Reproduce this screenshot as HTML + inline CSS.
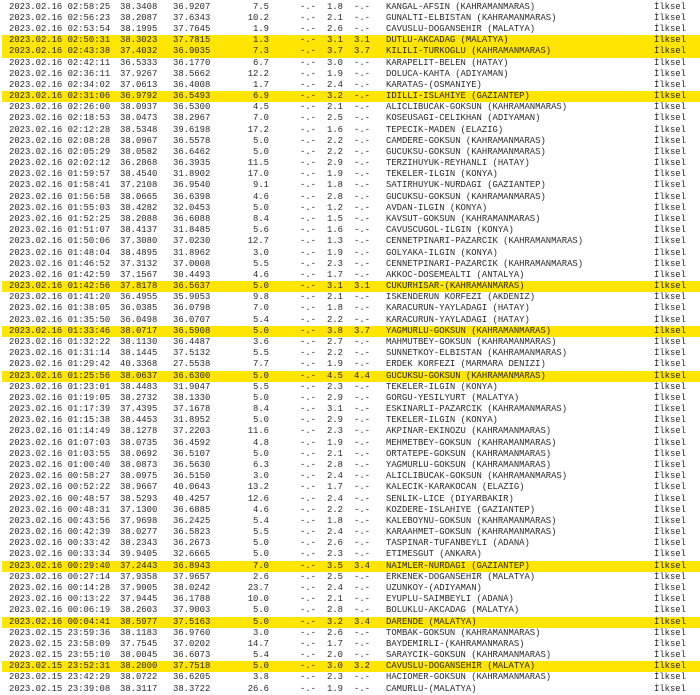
<!DOCTYPE html>
<html><head><meta charset="utf-8"><style>
html,body{margin:0;padding:0;background:#fff;width:700px;height:695px;overflow:hidden}
body{font-family:"Liberation Mono","DejaVu Sans Mono",monospace;font-size:8.9px;color:#2a2a2a;position:relative}
.r{position:absolute;left:2px;width:698px;height:11.2px;line-height:11.2px;white-space:pre}
.h{background:#ffe500}
.r span{position:absolute;top:0}
.a{left:7px}.b{left:118px}.c{left:171px}.d{right:431px;text-align:right}.e{left:298px}.f{left:325px}.g{left:352px}.n{left:384px}.k{left:652px}
</style></head><body>
<div id="t"></div>
<script>
var rows=[
["2023.02.16 02:58:25","38.3408","36.9207","7.5","1.8","-.-","KANGAL-AFSIN (KAHRAMANMARAS)",0],
["2023.02.16 02:56:23","38.2087","37.6343","10.2","2.1","-.-","GUNALTI-ELBISTAN (KAHRAMANMARAS)",0],
["2023.02.16 02:53:54","38.1995","37.7645","1.9","2.6","-.-","CAVUSLU-DOGANSEHIR (MALATYA)",0],
["2023.02.16 02:50:31","38.3023","37.7815","1.3","3.1","3.1","DUTLU-AKCADAG (MALATYA)",1],
["2023.02.16 02:43:38","37.4032","36.9035","7.3","3.7","3.7","KILILI-TURKOGLU (KAHRAMANMARAS)",1],
["2023.02.16 02:42:11","36.5333","36.1770","6.7","3.0","-.-","KARAPELIT-BELEN (HATAY)",0],
["2023.02.16 02:36:11","37.9267","38.5662","12.2","1.9","-.-","DOLUCA-KAHTA (ADIYAMAN)",0],
["2023.02.16 02:34:02","37.0613","36.4008","1.7","2.4","-.-","KARATAS-(OSMANIYE)",0],
["2023.02.16 02:31:06","36.9792","36.5493","6.9","3.2","-.-","IDILLI-ISLAHIYE (GAZIANTEP)",1],
["2023.02.16 02:26:00","38.0937","36.5300","4.5","2.1","-.-","ALICLIBUCAK-GOKSUN (KAHRAMANMARAS)",0],
["2023.02.16 02:18:53","38.0473","38.2967","7.0","2.5","-.-","KOSEUSAGI-CELIKHAN (ADIYAMAN)",0],
["2023.02.16 02:12:28","38.5348","39.6198","17.2","1.6","-.-","TEPECIK-MADEN (ELAZIG)",0],
["2023.02.16 02:08:28","38.0967","36.5578","5.0","2.2","-.-","CAMDERE-GOKSUN (KAHRAMANMARAS)",0],
["2023.02.16 02:05:29","38.0582","36.6462","5.0","2.2","-.-","GUCUKSU-GOKSUN (KAHRAMANMARAS)",0],
["2023.02.16 02:02:12","36.2868","36.3935","11.5","2.9","-.-","TERZIHUYUK-REYHANLI (HATAY)",0],
["2023.02.16 01:59:57","38.4540","31.8902","17.0","1.9","-.-","TEKELER-ILGIN (KONYA)",0],
["2023.02.16 01:58:41","37.2108","36.9540","9.1","1.8","-.-","SATIRHUYUK-NURDAGI (GAZIANTEP)",0],
["2023.02.16 01:56:58","38.0665","36.6398","4.6","2.8","-.-","GUCUKSU-GOKSUN (KAHRAMANMARAS)",0],
["2023.02.16 01:55:03","38.4282","32.0453","5.0","1.2","-.-","AVDAN-ILGIN (KONYA)",0],
["2023.02.16 01:52:25","38.2088","36.6088","8.4","1.5","-.-","KAVSUT-GOKSUN (KAHRAMANMARAS)",0],
["2023.02.16 01:51:07","38.4137","31.8485","5.6","1.6","-.-","CAVUSCUGOL-ILGIN (KONYA)",0],
["2023.02.16 01:50:06","37.3080","37.0230","12.7","1.3","-.-","CENNETPINARI-PAZARCIK (KAHRAMANMARAS)",0],
["2023.02.16 01:48:04","38.4895","31.8962","3.0","1.9","-.-","GOLYAKA-ILGIN (KONYA)",0],
["2023.02.16 01:46:52","37.3132","37.0008","5.5","2.3","-.-","CENNETPINARI-PAZARCIK (KAHRAMANMARAS)",0],
["2023.02.16 01:42:59","37.1567","30.4493","4.6","1.7","-.-","AKKOC-DOSEMEALTI (ANTALYA)",0],
["2023.02.16 01:42:56","37.8178","36.5637","5.0","3.1","3.1","CUKURHISAR-(KAHRAMANMARAS)",1],
["2023.02.16 01:41:20","36.4955","35.9053","9.8","2.1","-.-","ISKENDERUN KORFEZI (AKDENIZ)",0],
["2023.02.16 01:38:05","36.0385","36.0798","7.0","1.8","-.-","KARACURUN-YAYLADAGI (HATAY)",0],
["2023.02.16 01:35:50","36.0498","36.0707","5.4","2.2","-.-","KARACURUN-YAYLADAGI (HATAY)",0],
["2023.02.16 01:33:46","38.0717","36.5908","5.0","3.8","3.7","YAGMURLU-GOKSUN (KAHRAMANMARAS)",1],
["2023.02.16 01:32:22","38.1130","36.4487","3.6","2.7","-.-","MAHMUTBEY-GOKSUN (KAHRAMANMARAS)",0],
["2023.02.16 01:31:14","38.1445","37.5132","5.5","2.2","-.-","SUNNETKOY-ELBISTAN (KAHRAMANMARAS)",0],
["2023.02.16 01:29:42","40.3368","27.5538","7.7","1.9","-.-","ERDEK KORFEZI (MARMARA DENIZI)",0],
["2023.02.16 01:25:56","38.0637","36.6300","5.0","4.5","4.4","GUCUKSU-GOKSUN (KAHRAMANMARAS)",1],
["2023.02.16 01:23:01","38.4483","31.9047","5.5","2.3","-.-","TEKELER-ILGIN (KONYA)",0],
["2023.02.16 01:19:05","38.2732","38.1330","5.0","2.9","-.-","GORGU-YESILYURT (MALATYA)",0],
["2023.02.16 01:17:39","37.4395","37.1678","8.4","3.1","-.-","ESKINARLI-PAZARCIK (KAHRAMANMARAS)",0],
["2023.02.16 01:15:38","38.4453","31.8952","5.0","2.9","-.-","TEKELER-ILGIN (KONYA)",0],
["2023.02.16 01:14:49","38.1278","37.2203","11.6","2.3","-.-","AKPINAR-EKINOZU (KAHRAMANMARAS)",0],
["2023.02.16 01:07:03","38.0735","36.4592","4.8","1.9","-.-","MEHMETBEY-GOKSUN (KAHRAMANMARAS)",0],
["2023.02.16 01:03:55","38.0692","36.5107","5.0","2.1","-.-","ORTATEPE-GOKSUN (KAHRAMANMARAS)",0],
["2023.02.16 01:00:40","38.0873","36.5630","6.3","2.8","-.-","YAGMURLU-GOKSUN (KAHRAMANMARAS)",0],
["2023.02.16 00:58:27","38.0975","36.5150","3.0","2.4","-.-","ALICLIBUCAK-GOKSUN (KAHRAMANMARAS)",0],
["2023.02.16 00:52:22","38.9667","40.0643","13.2","1.7","-.-","KALECIK-KARAKOCAN (ELAZIG)",0],
["2023.02.16 00:48:57","38.5293","40.4257","12.6","2.4","-.-","SENLIK-LICE (DIYARBAKIR)",0],
["2023.02.16 00:48:31","37.1300","36.6885","4.6","2.2","-.-","KOZDERE-ISLAHIYE (GAZIANTEP)",0],
["2023.02.16 00:43:56","37.9698","36.2425","5.4","1.8","-.-","KALEBOYNU-GOKSUN (KAHRAMANMARAS)",0],
["2023.02.16 00:42:39","38.0277","36.5823","5.5","2.4","-.-","KARAAHMET-GOKSUN (KAHRAMANMARAS)",0],
["2023.02.16 00:33:42","38.2343","36.2673","5.0","2.6","-.-","TASPINAR-TUFANBEYLI (ADANA)",0],
["2023.02.16 00:33:34","39.9405","32.6665","5.0","2.3","-.-","ETIMESGUT (ANKARA)",0],
["2023.02.16 00:29:40","37.2443","36.8943","7.0","3.5","3.4","NAIMLER-NURDAGI (GAZIANTEP)",1],
["2023.02.16 00:27:14","37.9358","37.9657","2.6","2.5","-.-","ERKENEK-DOGANSEHIR (MALATYA)",0],
["2023.02.16 00:14:28","37.9005","38.0242","23.7","2.4","-.-","UZUNKOY-(ADIYAMAN)",0],
["2023.02.16 00:13:22","37.9445","36.1788","10.0","2.1","-.-","EYUPLU-SAIMBEYLI (ADANA)",0],
["2023.02.16 00:06:19","38.2603","37.9003","5.0","2.8","-.-","BOLUKLU-AKCADAG (MALATYA)",0],
["2023.02.16 00:04:41","38.5977","37.5163","5.0","3.2","3.4","DARENDE (MALATYA)",1],
["2023.02.15 23:59:36","38.1183","36.9760","3.0","2.6","-.-","TOMBAK-GOKSUN (KAHRAMANMARAS)",0],
["2023.02.15 23:58:09","37.7545","37.0202","14.7","1.7","-.-","BAYDEMIRLI-(KAHRAMANMARAS)",0],
["2023.02.15 23:55:10","38.0045","36.6073","5.4","2.0","-.-","SARAYCIK-GOKSUN (KAHRAMANMARAS)",0],
["2023.02.15 23:52:31","38.2000","37.7518","5.0","3.0","3.2","CAVUSLU-DOGANSEHIR (MALATYA)",1],
["2023.02.15 23:42:29","38.0722","36.6205","3.8","2.3","-.-","HACIOMER-GOKSUN (KAHRAMANMARAS)",0],
["2023.02.15 23:39:08","38.3117","38.3722","26.6","1.9","-.-","CAMURLU-(MALATYA)",0]];
var h="";
rows.forEach(function(r,i){
h+='<div class="r'+(r[7]?' h':'')+'" style="top:'+(1.6+i*11.18).toFixed(2)+'px"><span class="a">'+r[0]+'</span><span class="b">'+r[1]+'</span><span class="c">'+r[2]+'</span><span class="d">'+r[3]+'</span><span class="e">-.-</span><span class="f">'+r[4]+'</span><span class="g">'+r[5]+'</span><span class="n">'+r[6]+'</span><span class="k">İlksel</span></div>';
});
document.getElementById("t").innerHTML=h;
</script>
</body></html>
